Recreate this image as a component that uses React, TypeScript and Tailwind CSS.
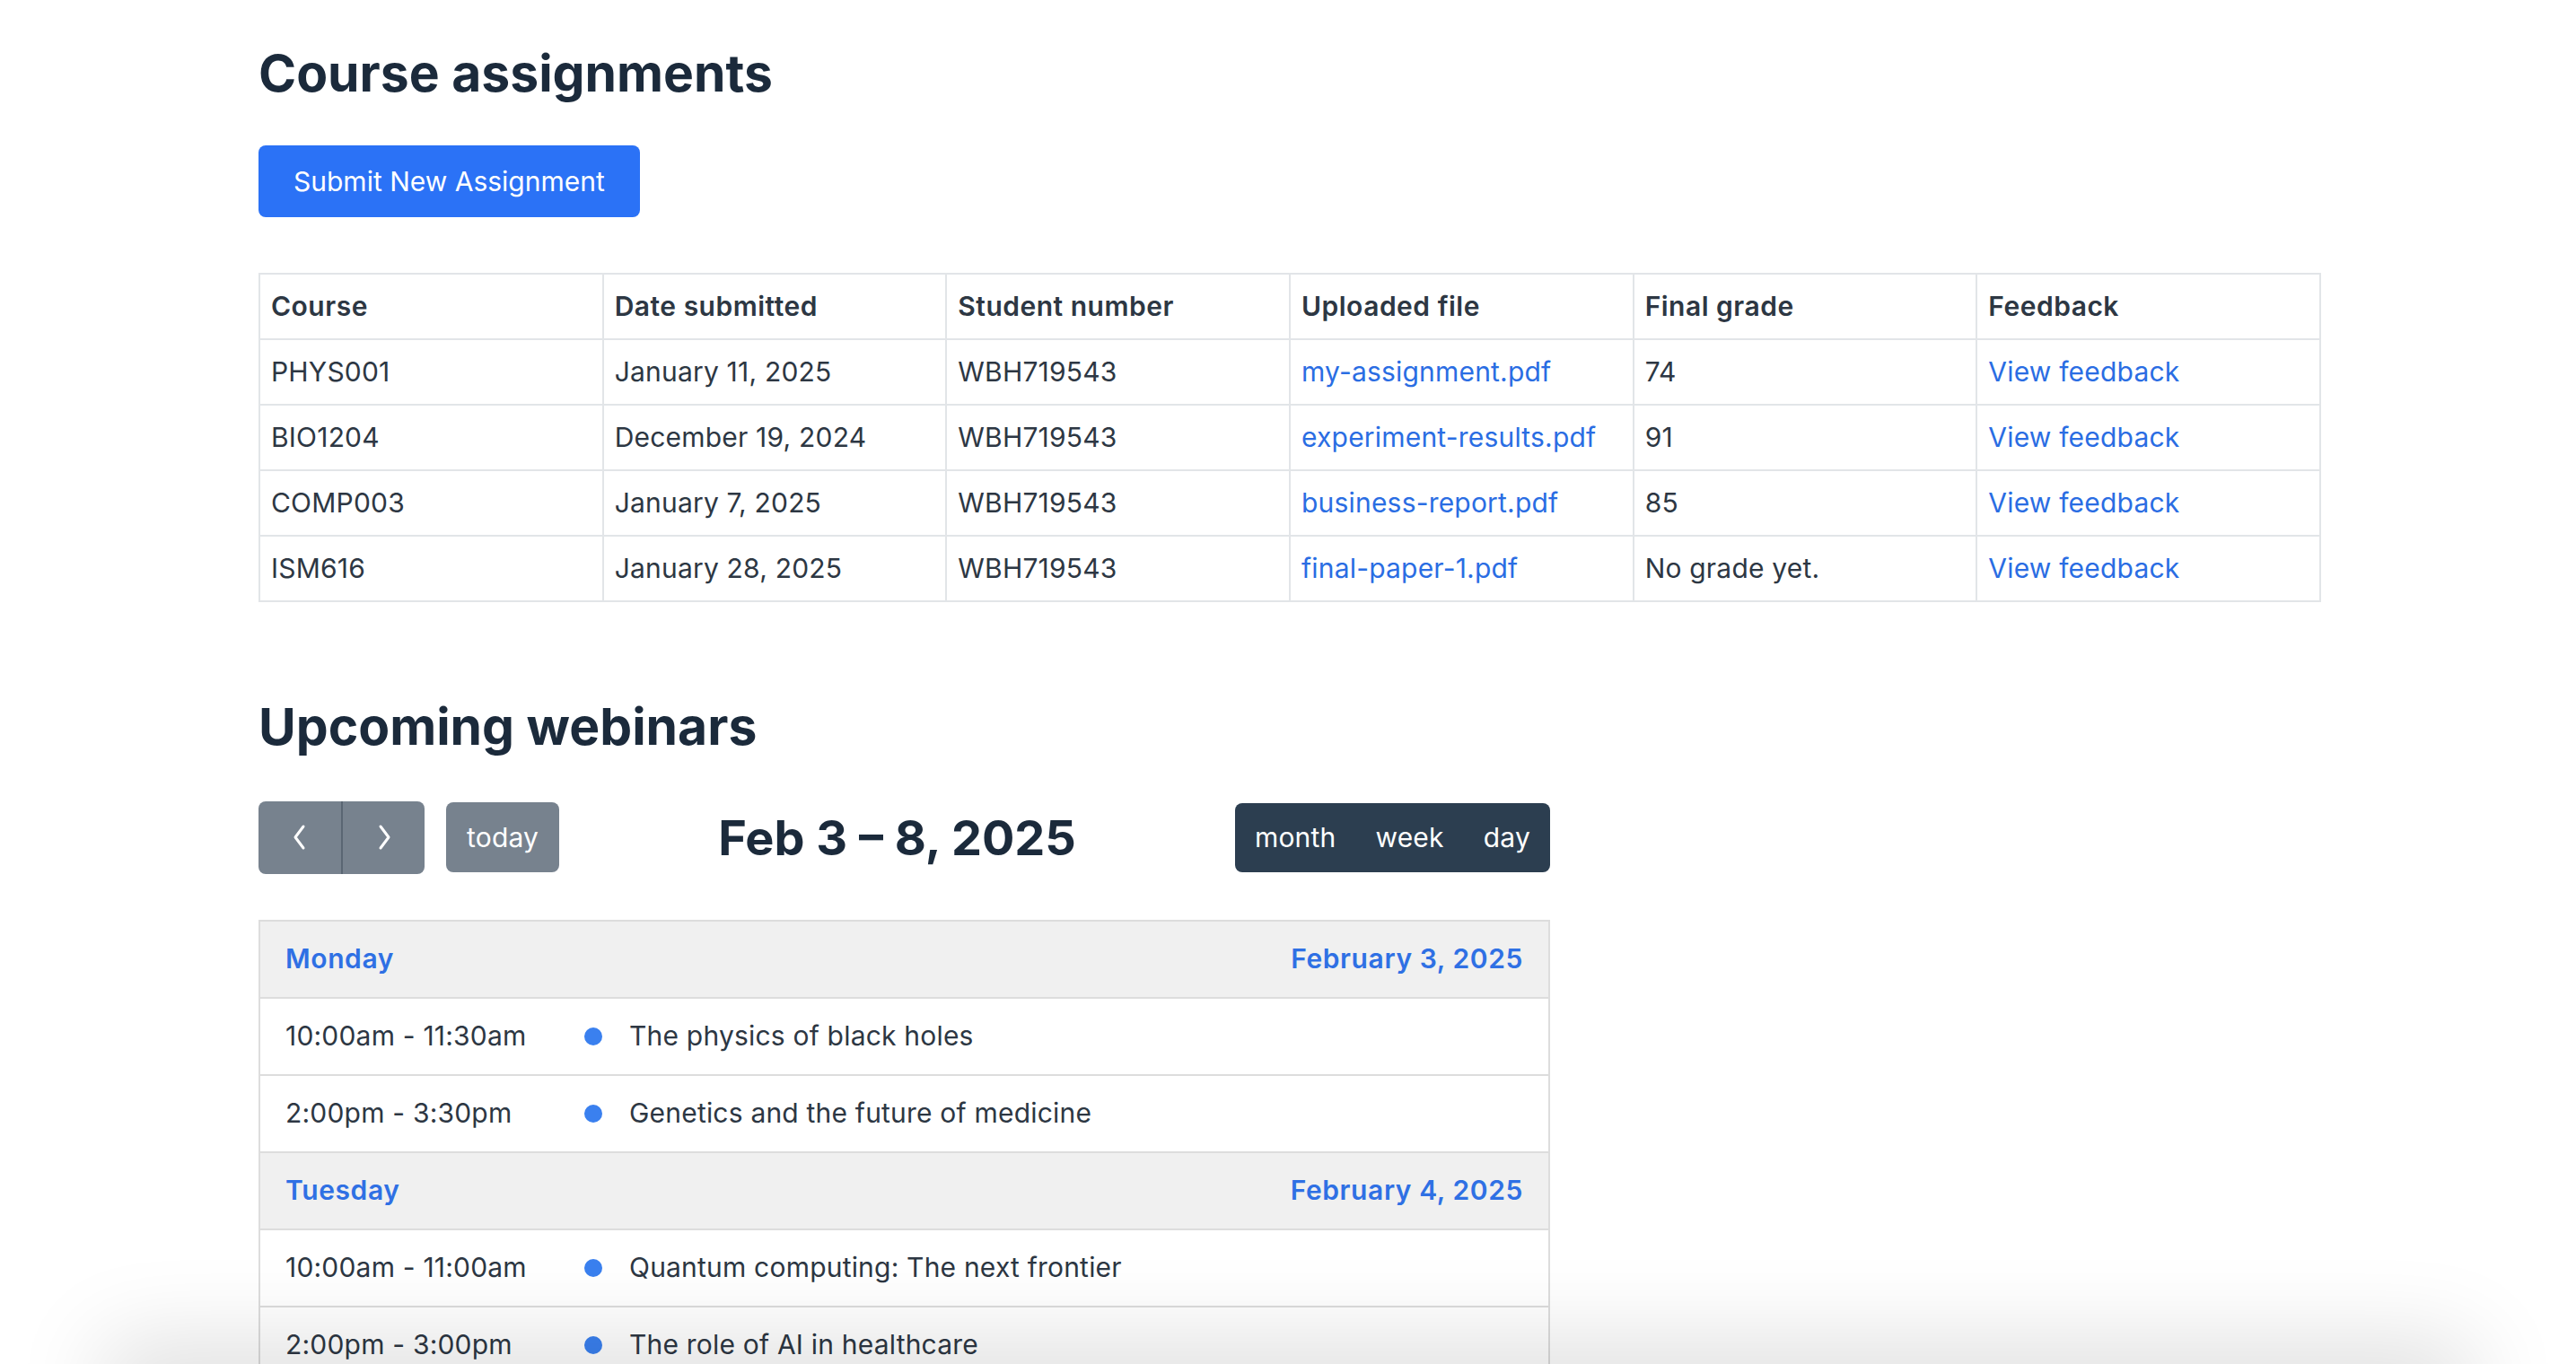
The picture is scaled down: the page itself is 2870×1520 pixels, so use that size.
import React from 'react';

interface Assignment {
  course: string;
  date: string;
  student: string;
  file: string;
  grade: string;
}

const assignments: Assignment[] = [
  { course: 'PHYS001', date: 'January 11, 2025', student: 'WBH719543', file: 'my-assignment.pdf', grade: '74' },
  { course: 'BIO1204', date: 'December 19, 2024', student: 'WBH719543', file: 'experiment-results.pdf', grade: '91' },
  { course: 'COMP003', date: 'January 7, 2025', student: 'WBH719543', file: 'business-report.pdf', grade: '85' },
  { course: 'ISM616', date: 'January 28, 2025', student: 'WBH719543', file: 'final-paper-1.pdf', grade: 'No grade yet.' }
];

const headers = ['Course', 'Date submitted', 'Student number', 'Uploaded file', 'Final grade', 'Feedback'];

const days = [
  {
    name: 'Monday',
    date: 'February 3, 2025',
    events: [
      { time: '10:00am - 11:30am', title: 'The physics of black holes' },
      { time: '2:00pm - 3:30pm', title: 'Genetics and the future of medicine' }
    ]
  },
  {
    name: 'Tuesday',
    date: 'February 4, 2025',
    events: [
      { time: '10:00am - 11:00am', title: 'Quantum computing: The next frontier' },
      { time: '2:00pm - 3:00pm', title: 'The role of AI in healthcare' }
    ]
  }
];

const Chevron = ({ dir }: { dir: 'left' | 'right' }) => (
  <svg width="18" height="30" viewBox="0 0 18 30" fill="none">
    <path
      d={dir === 'left' ? 'M13 3 L4 15 L13 27' : 'M5 3 L14 15 L5 27'}
      stroke="white"
      strokeWidth="3"
      strokeLinecap="round"
      strokeLinejoin="round"
    />
  </svg>
);

export default function App() {
  return (
    <div className="relative h-screen overflow-hidden bg-white font-['Inter','Liberation_Sans',sans-serif] text-[30px] tracking-[0.2px] text-[#2d3743]">
      <div className="ml-[288px] w-[2298px] pt-[48px]">
        <h1 className="text-[57px] font-bold leading-[1.2] tracking-normal text-[#1b2a3b]">Course assignments</h1>

        <button className="mt-[46px] h-[80px] rounded-[8px] bg-[#2b72f6] px-[39px] tracking-normal text-white">
          Submit New Assignment
        </button>

        <table className="mt-[62px] w-full table-fixed border-collapse">
          <thead>
            <tr>
              {headers.map((h) => (
                <th key={h} className="h-[73px] border-2 border-[#e2e5e8] px-[12px] text-left font-semibold tracking-[0.5px]">
                  {h}
                </th>
              ))}
            </tr>
          </thead>
          <tbody>
            {assignments.map((a) => (
              <tr key={a.course}>
                <td className="h-[73px] border-2 border-[#e2e5e8] px-[12px]">{a.course}</td>
                <td className="border-2 border-[#e2e5e8] px-[12px]">{a.date}</td>
                <td className="border-2 border-[#e2e5e8] px-[12px]">{a.student}</td>
                <td className="border-2 border-[#e2e5e8] px-[12px] text-[#2a6de3]">{a.file}</td>
                <td className="border-2 border-[#e2e5e8] px-[12px]">{a.grade}</td>
                <td className="border-2 border-[#e2e5e8] px-[12px] text-[#2a6de3]">View feedback</td>
              </tr>
            ))}
          </tbody>
        </table>

        <h2 className="mt-[105px] text-[57px] font-bold leading-[1.2] tracking-normal text-[#1b2a3b]">Upcoming webinars</h2>

        <div className="mt-[48px] flex w-[1439px] items-center justify-between">
          <div className="flex items-center gap-[24px]">
            <div className="flex h-[81px] overflow-hidden rounded-[8px] bg-[#77828e]">
              <button className="flex w-[92px] items-center justify-center">
                <Chevron dir="left" />
              </button>
              <div className="w-[2px] bg-[#5a6673]" />
              <button className="flex w-[91px] items-center justify-center">
                <Chevron dir="right" />
              </button>
            </div>
            <button className="h-[78px] rounded-[8px] bg-[#77828e] px-[23px] text-white">today</button>
          </div>
          <div className="text-[54px] font-bold tracking-normal text-[#1b2a3b]">Feb 3 – 8, 2025</div>
          <div className="flex h-[77px] overflow-hidden rounded-[8px] bg-[#2c3e50] text-white">
            {['month', 'week', 'day'].map((v) => (
              <button key={v} className="px-[22px]">
                {v}
              </button>
            ))}
          </div>
        </div>

        <div className="mt-[51px] w-[1439px] border-2 border-[#dddddd]">
          {days.map((d) => (
            <div key={d.name}>
              <div className="flex h-[86px] items-center justify-between border-b-2 border-[#dddddd] bg-[#f0f0f0] px-[28px] font-semibold tracking-[0.6px] text-[#2f70e4]">
                <span>{d.name}</span>
                <span>{d.date}</span>
              </div>
              {d.events.map((e) => (
                <div key={e.title} className="flex h-[86px] items-center border-b-2 border-[#dddddd] px-[28px]">
                  <span className="w-[333px]">{e.time}</span>
                  <span className="h-[20px] w-[20px] rounded-full bg-[#3a80ef]" />
                  <span className="ml-[30px]">{e.title}</span>
                </div>
              ))}
            </div>
          ))}
        </div>
      </div>

      {/* soft shadow along the bottom edge of the window */}
      <div className="pointer-events-none absolute bottom-[-60px] left-[140px] right-[140px] h-[60px] shadow-[0_0_100px_25px_rgba(0,0,0,0.13)]" />
    </div>
  );
}
